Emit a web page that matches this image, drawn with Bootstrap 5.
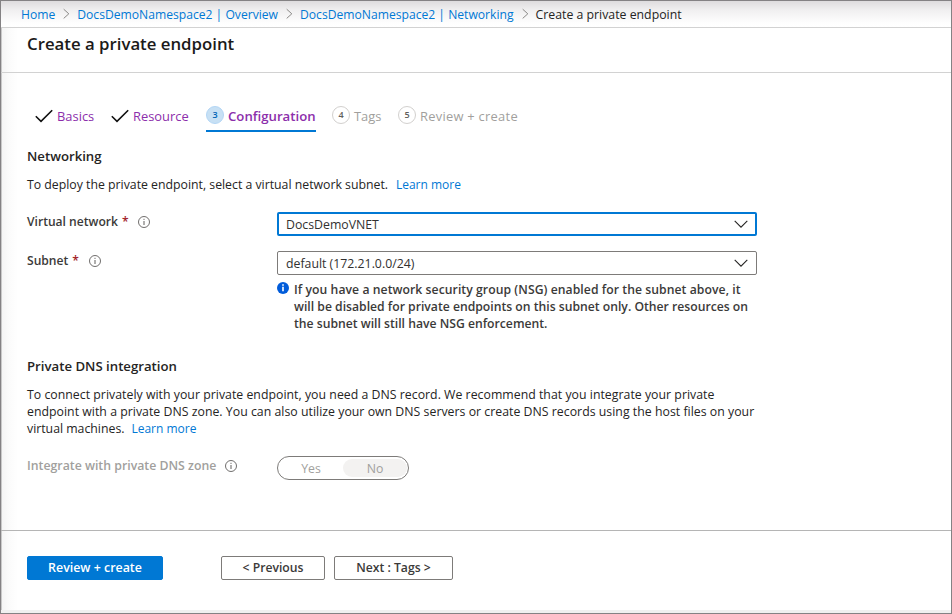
<!DOCTYPE html>
<html lang="en">
<head>
<meta charset="utf-8">
<title>Create a private endpoint</title>
<link href="https://cdn.jsdelivr.net/npm/bootstrap@5.3.0/dist/css/bootstrap.min.css" rel="stylesheet">
<style>
  body { font: 400 12.3px/17px "Open Sans", "Noto Sans", sans-serif; color: #323130; background: #fff; overflow: hidden; }
  a { color: #0078d4; text-decoration: none; }
  svg { display: block; flex: none; }
  .shell { height: 614px; border: 1px solid #848284;
    background: linear-gradient(to right, #c9c9c9 1px, #f5f5f5 1px, #fbfbfb 8px, #fff 17px); }
  .crumbs { height: 27px; padding-left: 20px; font-size: 12.13px; border-bottom: 1px solid #d2d2d2;
    background: linear-gradient(to bottom, #dedcde, #f0eff0 9px, #fefefe 22px, #fff); white-space: nowrap; }
  .crumbs .here { font-size: 12.3px; color: #252423; }
  .crumb-sep { margin: 0 7px 0 8px; }
  .page-title { height: 45px; padding: 0 0 12px 26px; border-bottom: 1px solid #d2d2d2; }
  .page-title h1 { font-size: 16.8px; font-weight: 600; color: #1b1a19; line-height: 32px; }
  .content-area { height: 457px; padding: 27px 0 0 26px; }
  .steps { height: 32px; margin-left: 8px; white-space: nowrap; }
  .steps .nav-link { padding: 0; font-size: 12.9px; display: flex; align-items: center; height: 32px; color: #8c2eab; }
  .steps .nav-link.off { color: #a19f9d; }
  .steps .nav-link.last { letter-spacing: .27px; }
  .steps .nav-link.current { font-weight: 600; font-size: 13.2px; border-bottom: 2px solid #0078d4; width: 110px; padding-top: 2px; }
  .step-no { width: 18px; height: 18px; border: 1px solid #d2d0ce; border-radius: 50%; font-size: 9px; font-weight: 600; letter-spacing: 0;
    line-height: 16px; text-align: center; color: #605e5c; margin: 0 4px 2px 0; }
  .current .step-no { background: #c7e0f4; border-color: #b3d6f5; color: #0064b5; margin-bottom: 3px; }
  .section-title { font-size: 13.2px; font-weight: 600; line-height: 20px; color: #252423; margin: 0; }
  .field-label { width: 250px; font-weight: 600; font-size: 12.1px; height: 20px; color: #3b3a39; }
  .field-label .caption-text { margin-bottom: 2px; }
  .field-label svg { margin-left: 9px; }
  .req { color: #a4262c; margin-left: 4px; }
  .picker { width: 480px; height: 24px; border: 1px solid #7d7b79; border-radius: 2px; padding: 0 8px; background: #fff; }
  .picker.focused { border: 2px solid #0078d4; padding: 0 7px; }
  .hint { font-weight: 600; font-size: 12.2px; white-space: nowrap; margin-top: 6px; color: #3b3a39; }
  .blurb { color: #252423; white-space: nowrap; letter-spacing: -.01px; }
  .more { font-size: 12px; margin-left: 8px; }
  .blurb .wide { letter-spacing: .02px; }
  .toggle-pill { width: 132px; height: 24px; border: 1px solid #7d7b79; border-radius: 12px; padding: 2px 1px; color: #a19f9d; background: #fff; }
  .toggle-pill span { flex: 1; text-align: center; line-height: 19px; height: 18px; border-radius: 9px; }
  .toggle-pill .sel { background: #f3f2f1; }
  .actions { height: 80px; border-top: 1px solid #b5b5b5; padding: 25px 0 0 26px; }
  .actions .btn { height: 24px; padding: 0; font-size: 12.2px; font-weight: 600; line-height: 22px; border-radius: 2px; color: #3b3a39; border: 1px solid #7d7b79; background: #fff; }
  .actions .btn-primary { background: #0078d4; border-color: #0078d4; color: #fff; width: 136px; margin-right: 58px; font-size: 12.4px; }
  .actions .btn-prev { width: 104px; margin-right: 9px; }
  .actions .btn-next { width: 119px; }
  .foot-strip { height: 3px; background: #f0f0f0; }
</style>
</head>
<body>
<svg width="0" height="0" class="position-absolute">
  <symbol id="sep" viewBox="0 0 7 12"><path d="M.7 1.2 5.8 5.8.7 10.4" fill="none" stroke="#8a8886"/></symbol>
  <symbol id="tick" viewBox="0 0 18 14"><path d="M.8 7.2 6 12.4 17.2 1.2" fill="none" stroke="#111" stroke-width="1.6"/></symbol>
  <symbol id="info" viewBox="0 0 12 12"><circle cx="6" cy="6" r="5.5" fill="none" stroke="#605e5c" stroke-width=".9"/><path d="M6 5v4M6 2.8v1.1" stroke="#605e5c"/></symbol>
  <symbol id="chev" viewBox="0 0 14 8"><path d="M.7.8 7 7.1 13.3.8" fill="none" stroke="#252423" stroke-width="1.1"/></symbol>
</svg>
<div class="shell d-flex flex-column">
  <nav class="crumbs d-flex align-items-center">
    <a href="#">Home</a><svg class="crumb-sep" width="7" height="12"><use href="#sep"/></svg>
    <a href="#">DocsDemoNamespace2 | Overview</a><svg class="crumb-sep" width="7" height="12"><use href="#sep"/></svg>
    <a href="#">DocsDemoNamespace2 | Networking</a><svg class="crumb-sep" width="7" height="12"><use href="#sep"/></svg>
    <span class="here">Create a private endpoint</span>
  </nav>
  <header class="page-title"><h1 class="m-0">Create a private endpoint</h1></header>
  <main class="content-area">
    <div class="steps nav flex-nowrap">
      <a class="nav-link" href="#" style="width:76px"><svg class="me-1" width="18" height="14"><use href="#tick"/></svg>Basics</a>
      <a class="nav-link" href="#" style="width:95px"><svg class="me-1" width="18" height="14"><use href="#tick"/></svg>Resource</a>
      <a class="nav-link current" href="#"><span class="step-no">3</span>Configuration</a>
      <a class="nav-link off" href="#" style="margin-left:16px;width:66px"><span class="step-no">4</span>Tags</a>
      <a class="nav-link off last" href="#"><span class="step-no">5</span>Review + create</a>
    </div>
    <h2 class="section-title" style="margin-top:14px">Networking</h2>
    <p class="blurb mb-0" style="margin-top:10px">To deploy the private endpoint, select a virtual network subnet.<a class="more" href="#">Learn more</a></p>
    <div class="d-flex" style="margin-top:19px">
      <div class="field-label d-flex align-items-center"><span class="caption-text">Virtual network<span class="req">*</span></span><svg width="12" height="12"><use href="#info"/></svg></div>
      <div class="picker focused d-flex align-items-center justify-content-between">DocsDemoVNET<svg width="14" height="8"><use href="#chev"/></svg></div>
    </div>
    <div class="d-flex" style="margin-top:15px">
      <div class="field-label d-flex align-items-center"><span class="caption-text">Subnet<span class="req">*</span></span><svg style="margin-left:10px" width="12" height="12"><use href="#info"/></svg></div>
      <div>
        <div class="picker d-flex align-items-center justify-content-between">default (172.21.0.0/24)<svg width="14" height="8"><use href="#chev"/></svg></div>
        <div class="hint d-flex">
          <svg style="margin:1px 5px 0 0" width="12" height="12" viewBox="0 0 12 12"><circle cx="6" cy="6" r="6" fill="#015cda"/><path d="M6 4.8v4.4M6 2.2v1.6" stroke="#fff" stroke-width="1.6"/></svg>
          <div><span style="letter-spacing:.06px">If you have a network security group (NSG) enabled for the subnet above, it</span><br>will be disabled for private endpoints on this subnet only. Other resources on<br>the subnet will still have NSG enforcement.</div>
        </div>
      </div>
    </div>
    <h2 class="section-title" style="margin-top:24px">Private DNS integration</h2>
    <p class="blurb mb-0" style="margin-top:10px"><span class="wide">To connect privately with your private endpoint, you need a DNS record. We recommend that you integrate your private<br>endpoint with a private DNS zone. You can also utilize your own DNS servers or create DNS records using the host files on your</span><br>virtual machines.<a class="more" href="#" style="margin-left:7px">Learn more</a></p>
    <div class="d-flex" style="margin-top:19px">
      <div class="field-label d-flex align-items-center" style="color:#a19f9d;font-size:12.3px"><span class="caption-text">Integrate with private DNS zone</span><svg width="12" height="12"><use href="#info"/></svg></div>
      <div class="toggle-pill d-flex"><span>Yes</span><span class="sel">No</span></div>
    </div>
  </main>
  <footer class="actions d-flex align-items-start">
    <button class="btn btn-primary">Review + create</button>
    <button class="btn btn-prev">&lt; Previous</button>
    <button class="btn btn-next">Next : Tags &gt;</button>
  </footer>
  <div class="foot-strip"></div>
</div>
<script src="https://cdn.jsdelivr.net/npm/bootstrap@5.3.0/dist/js/bootstrap.bundle.min.js"></script>
</body>
</html>
